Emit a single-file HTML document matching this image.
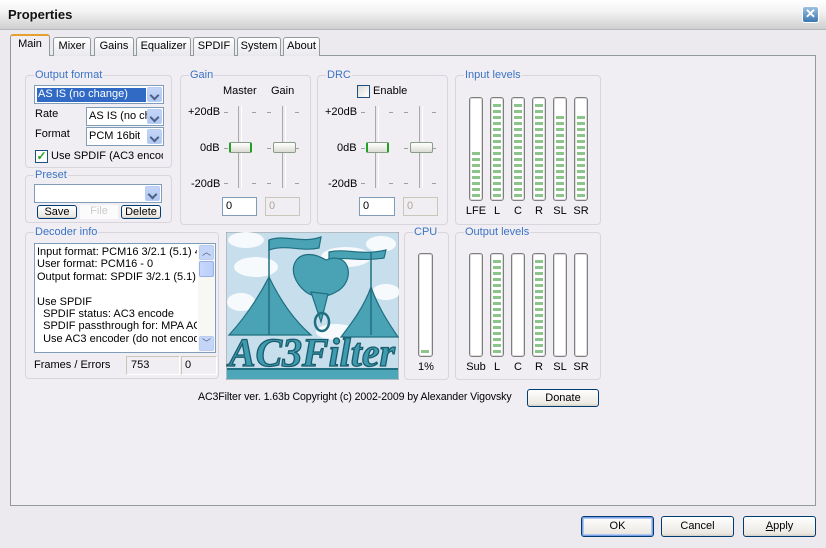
<!DOCTYPE html>
<html><head><meta charset="utf-8"><style>
*{box-sizing:border-box}
body{margin:0;width:826px;height:548px;overflow:hidden;background:#ece9ef;font-family:"Liberation Sans",Tahoma,sans-serif;font-size:11px;color:#000;position:relative}
.a{position:absolute}
.title{left:0;top:0;width:826px;height:30px;background:linear-gradient(#fff 0%,#f3f3f3 40%,#cfcfcf 100%);border-bottom:1px solid #b8b8b8}
.title span{position:absolute;left:8px;top:7px;font-weight:bold;font-size:13px;color:#111}
.close{left:802px;top:6px;width:17px;height:17px;border-radius:3px;background:linear-gradient(#9ac0e0,#3d78b0);border:1px solid #fff;color:#fff;font-weight:bold;font-size:13px;text-align:center;line-height:14px}
.panel{left:10px;top:55px;width:806px;height:451px;border:1px solid #919b9c;background:#f0eef3}
.tab{top:37px;height:19px;border:1px solid #919b9c;border-bottom:none;border-radius:3px 3px 0 0;background:linear-gradient(#fff,#e8e8ee);text-align:center;line-height:17px;font-size:11px}
.tab.sel{top:34px;height:22px;background:#f0eef3;border-top:2px solid #e6a030;z-index:2}
.grp{border:1px solid #d8d6dc;border-radius:4px}
.gl{position:absolute;top:-7px;left:8px;background:#f0eef3;color:#3b73c4;padding:0 1px;font-size:11px;line-height:12px}
.combo{background:#fff;border:1px solid #7f9db9;height:19px}
.combo .t{position:absolute;left:2px;top:2px;white-space:nowrap;overflow:hidden}
.dd{position:absolute;right:1px;top:1px;width:15px;height:15px;border-radius:2px;background:linear-gradient(#c4d5f7,#b0c8f2);border:1px solid #b9cdf2}
.dd:after{content:"";position:absolute;left:3px;top:4px;width:5px;height:5px;border-right:2px solid #4d6185;border-bottom:2px solid #4d6185;transform:rotate(45deg)}
.btn{border:1px solid #003c74;border-radius:3px;background:linear-gradient(#fff,#ece9e3 85%,#d6d0c5);text-align:center;line-height:18px}
.edit{background:#fff;border:1px solid #7f9db9;padding-left:3px;line-height:17px}
.edit.dis{background:#f0eef3;border-color:#c9c7ba;color:#aca899}
.track{width:4px;border-left:1px solid #a9a9a9;border-right:1px solid #fff;background:#ece9ef}
.tick{width:4px;height:1px;background:#a0a0a0}
.thumb{width:23px;height:11px;border-radius:2px;border:1px solid #8b9c8b;background:linear-gradient(#fff,#dcdcd4)}
.thumb.g{border-left:2px solid #21a121;border-right:2px solid #21a121}
.meter{width:14px;height:104px;border:1px solid #7f7f7f;border-radius:3px;background:#fff;box-shadow:inset 0 0 0 1px #ddd}
.fill{position:absolute;left:2px;bottom:3px;width:8px;background:repeating-linear-gradient(to top,#8cc48c 0 3px,transparent 3px 6px)}
.lab{text-align:center;width:22px}
</style></head><body>
<div class="a title"><span>Properties</span></div>
<div class="a close">✕</div>

<div class="a panel"></div>
<div class="a tab sel" style="left:10px;width:40px">Main</div>
<div class="a tab" style="left:53px;width:38px">Mixer</div>
<div class="a tab" style="left:94px;width:40px">Gains</div>
<div class="a tab" style="left:136px;width:55px">Equalizer</div>
<div class="a tab" style="left:193px;width:42px">SPDIF</div>
<div class="a tab" style="left:237px;width:44px">System</div>
<div class="a tab" style="left:283px;width:37px">About</div>

<div class="a grp" style="left:25px;top:75px;width:147px;height:93px"><span class="gl">Output format</span></div>
<div class="a combo" style="left:34px;top:85px;width:130px"><div class="a" style="left:2px;top:2px;width:109px;height:14px;background:#316ac5"></div><span class="t" style="color:#fff;left:3px">AS IS (no change)</span><div class="dd"></div></div>
<div class="a" style="left:35px;top:108px">Rate</div>
<div class="a combo" style="left:86px;top:107px;width:78px"><span class="t" style="width:58px">AS IS (no change)</span><div class="dd"></div></div>
<div class="a" style="left:35px;top:128px">Format</div>
<div class="a combo" style="left:86px;top:127px;width:78px"><span class="t">PCM 16bit</span><div class="dd"></div></div>
<div class="a" style="left:35px;top:150px;width:13px;height:13px;border:1px solid #1c5180;background:#fff;color:#21a121;font-size:12px;line-height:11px;text-align:center;font-weight:bold">✓</div>
<div class="a" style="left:51px;top:150px;white-space:nowrap;width:112px;overflow:hidden">Use SPDIF (AC3 encode)</div>

<div class="a grp" style="left:25px;top:175px;width:147px;height:48px"><span class="gl">Preset</span></div>
<div class="a combo" style="left:34px;top:184px;width:128px"><div class="dd"></div></div>
<div class="a btn" style="left:37px;top:205px;width:40px;height:14px;line-height:12px">Save</div>
<div class="a" style="left:80px;top:205px;width:38px;height:14px;line-height:12px;text-align:center;background:#fbfbfb;color:#ccc">File</div>
<div class="a btn" style="left:121px;top:205px;width:40px;height:14px;line-height:12px">Delete</div>

<div class="a grp" style="left:180px;top:75px;width:131px;height:150px"><span class="gl">Gain</span></div>
<div class="a" style="left:223px;top:85px">Master</div>
<div class="a" style="left:271px;top:85px">Gain</div>
<div class="a" style="left:188px;top:106px">+20dB</div>
<div class="a" style="left:200px;top:142px">0dB</div>
<div class="a" style="left:191px;top:178px">-20dB</div>
<div class="a track" style="left:238px;top:106px;height:82px"></div>
<div class="a track" style="left:282px;top:106px;height:82px"></div>
<div class="a tick" style="left:224px;top:112px"></div><div class="a tick" style="left:252px;top:112px"></div><div class="a tick" style="left:267px;top:112px"></div><div class="a tick" style="left:295px;top:112px"></div>
<div class="a tick" style="left:224px;top:148px"></div><div class="a tick" style="left:267px;top:148px"></div><div class="a tick" style="left:295px;top:148px"></div>
<div class="a tick" style="left:224px;top:183px"></div><div class="a tick" style="left:252px;top:183px"></div><div class="a tick" style="left:267px;top:183px"></div><div class="a tick" style="left:295px;top:183px"></div>
<div class="a thumb g" style="left:229px;top:142px"></div>
<div class="a thumb" style="left:273px;top:142px"></div>
<div class="a edit" style="left:222px;top:197px;width:35px;height:19px">0</div>
<div class="a edit dis" style="left:265px;top:197px;width:35px;height:19px">0</div>

<div class="a grp" style="left:317px;top:75px;width:131px;height:150px"><span class="gl">DRC</span></div>
<div class="a" style="left:357px;top:85px;width:13px;height:13px;border:1px solid #1c5180;background:linear-gradient(135deg,#dcdcd4,#fff)"></div>
<div class="a" style="left:373px;top:85px">Enable</div>
<div class="a" style="left:325px;top:106px">+20dB</div>
<div class="a" style="left:337px;top:142px">0dB</div>
<div class="a" style="left:328px;top:178px">-20dB</div>
<div class="a track" style="left:375px;top:106px;height:82px"></div>
<div class="a track" style="left:419px;top:106px;height:82px"></div>
<div class="a tick" style="left:361px;top:112px"></div><div class="a tick" style="left:389px;top:112px"></div><div class="a tick" style="left:404px;top:112px"></div><div class="a tick" style="left:432px;top:112px"></div>
<div class="a tick" style="left:361px;top:148px"></div><div class="a tick" style="left:404px;top:148px"></div><div class="a tick" style="left:432px;top:148px"></div>
<div class="a tick" style="left:361px;top:183px"></div><div class="a tick" style="left:389px;top:183px"></div><div class="a tick" style="left:404px;top:183px"></div><div class="a tick" style="left:432px;top:183px"></div>
<div class="a thumb g" style="left:366px;top:142px"></div>
<div class="a thumb" style="left:410px;top:142px"></div>
<div class="a edit" style="left:359px;top:197px;width:36px;height:19px">0</div>
<div class="a edit dis" style="left:403px;top:197px;width:35px;height:19px">0</div>

<div class="a grp" style="left:455px;top:75px;width:146px;height:150px"><span class="gl">Input levels</span></div>
<div class="a meter" style="left:469px;top:97px"><div class="fill" style="height:45px"></div></div>
<div class="a meter" style="left:490px;top:97px"><div class="fill" style="height:96px"></div></div>
<div class="a meter" style="left:511px;top:97px"><div class="fill" style="height:96px"></div></div>
<div class="a meter" style="left:532px;top:97px"><div class="fill" style="height:96px"></div></div>
<div class="a meter" style="left:553px;top:97px"><div class="fill" style="height:84px"></div></div>
<div class="a meter" style="left:574px;top:97px"><div class="fill" style="height:84px"></div></div>
<div class="a lab" style="left:465px;top:205px">LFE</div>
<div class="a lab" style="left:486px;top:205px">L</div>
<div class="a lab" style="left:507px;top:205px">C</div>
<div class="a lab" style="left:528px;top:205px">R</div>
<div class="a lab" style="left:549px;top:205px">SL</div>
<div class="a lab" style="left:570px;top:205px">SR</div>

<div class="a grp" style="left:25px;top:232px;width:194px;height:147px"><span class="gl">Decoder info</span></div>
<div class="a" style="left:34px;top:243px;width:182px;height:110px;border:1px solid #7f9db9;background:#fff;overflow:hidden">
<div style="position:absolute;left:2px;top:2px;width:160px;white-space:nowrap;overflow:hidden;line-height:12.4px">Input format: PCM16 3/2.1 (5.1) 48000<br>User format: PCM16 - 0<br>Output format: SPDIF 3/2.1 (5.1) 48000<br><br>Use SPDIF<br>&nbsp;&nbsp;SPDIF status: AC3 encode<br>&nbsp;&nbsp;SPDIF passthrough for: MPA AC3<br>&nbsp;&nbsp;Use AC3 encoder (do not encode)</div>
<div style="position:absolute;right:0;top:0;width:17px;height:108px;background:#f7f7f4"></div>
<div style="position:absolute;right:1px;top:1px;width:15px;height:15px;border-radius:2px;background:#c4d5f7;border:1px solid #b9cdf2;color:#4d6185;font-size:9px;text-align:center;line-height:13px">︿</div>
<div style="position:absolute;right:1px;top:17px;width:15px;height:16px;border-radius:2px;background:linear-gradient(90deg,#c9d8fc,#b8cdf8);border:1px solid #98b1e5"></div>
<div style="position:absolute;right:1px;bottom:1px;width:15px;height:15px;border-radius:2px;background:#c4d5f7;border:1px solid #b9cdf2;color:#4d6185;font-size:9px;text-align:center;line-height:13px">﹀</div>
</div>
<div class="a" style="left:34px;top:359px">Frames / Errors</div>
<div class="a" style="left:126px;top:356px;width:54px;height:19px;border:1px solid #c9c7ba;border-right-color:#fff;border-bottom-color:#fff;padding-left:4px;line-height:17px">753</div>
<div class="a" style="left:181px;top:356px;width:36px;height:19px;border:1px solid #c9c7ba;border-right-color:#fff;border-bottom-color:#fff;padding-left:3px;line-height:17px">0</div>

<svg class="a" style="left:226px;top:232px" width="173" height="148" viewBox="0 0 173 148">
<rect x="0" y="0" width="173" height="148" fill="#c7dfec" stroke="#999"/>
<g fill="#fff" opacity=".85"><ellipse cx="20" cy="8" rx="18" ry="8"/><ellipse cx="30" cy="35" rx="22" ry="10"/><ellipse cx="120" cy="25" rx="25" ry="10"/><ellipse cx="155" cy="12" rx="15" ry="8"/><ellipse cx="160" cy="60" rx="14" ry="8"/><ellipse cx="15" cy="70" rx="14" ry="9"/><ellipse cx="110" cy="100" rx="20" ry="8"/></g>
<g fill="#4aa3b5" stroke="#1f6f80" stroke-width="1.2">
<path d="M43 8 C60 2,75 12,95 5 L93 16 C75 20,60 12,43 18Z"/>
<path d="M103 20 C120 16,135 24,160 18 L158 26 C135 30,120 24,103 28Z"/>
<path d="M43 45 C30 70,15 90,3 103 L85 103 C70 90,55 70,43 45Z"/>
<path d="M145 55 C138 75,125 92,115 105 L172 105 C162 90,152 75,145 55Z"/>
<path d="M80 60 C55 40,70 10,100 28 C125 18,130 50,110 60 C100 66,88 66,80 60Z"/>
<path d="M85 60 L95 90 L102 62Z"/>
</g>
<line x1="43" y1="8" x2="43" y2="103" stroke="#1f6f80" stroke-width="1.5"/>
<line x1="145" y1="20" x2="145" y2="103" stroke="#1f6f80" stroke-width="1.5"/>
<ellipse cx="96" cy="90" rx="7" ry="9" fill="none" stroke="#1f6f80" stroke-width="2.5"/>
<text x="86" y="134" text-anchor="middle" font-family="Liberation Serif,serif" font-size="40" font-style="italic" font-weight="bold" fill="#3e9bb0" stroke="#1a5c6b" stroke-width="1.3" textLength="166" lengthAdjust="spacingAndGlyphs">AC3Filter</text>
<rect x="1" y="136" width="171" height="11" fill="#4ea7b8"/>
<rect x="1" y="136" width="171" height="2" fill="#1f6f80"/>
</svg>

<div class="a grp" style="left:404px;top:232px;width:45px;height:148px"><span class="gl" style="left:8px">CPU</span></div>
<div class="a meter" style="left:418px;top:253px;width:15px"><div class="fill" style="height:3px"></div></div>
<div class="a" style="left:418px;top:361px">1%</div>

<div class="a grp" style="left:455px;top:232px;width:146px;height:148px"><span class="gl">Output levels</span></div>
<div class="a meter" style="left:469px;top:253px"></div>
<div class="a meter" style="left:490px;top:253px"><div class="fill" style="height:96px"></div></div>
<div class="a meter" style="left:511px;top:253px"></div>
<div class="a meter" style="left:532px;top:253px"><div class="fill" style="height:96px"></div></div>
<div class="a meter" style="left:553px;top:253px"></div>
<div class="a meter" style="left:574px;top:253px"></div>
<div class="a lab" style="left:465px;top:361px">Sub</div>
<div class="a lab" style="left:486px;top:361px">L</div>
<div class="a lab" style="left:507px;top:361px">C</div>
<div class="a lab" style="left:528px;top:361px">R</div>
<div class="a lab" style="left:549px;top:361px">SL</div>
<div class="a lab" style="left:570px;top:361px">SR</div>

<div class="a" style="left:198px;top:391px;white-space:nowrap;font-size:10.6px;letter-spacing:-0.1px">AC3Filter ver. 1.63b Copyright (c) 2002-2009 by Alexander Vigovsky</div>
<div class="a btn" style="left:527px;top:389px;width:72px;height:18px;line-height:16px">Donate</div>

<div class="a btn" style="left:581px;top:516px;width:73px;height:21px;border-color:#003c74;box-shadow:inset 0 0 0 1px #7ba2e7, inset 0 0 0 2px #b0c8f0">OK</div>
<div class="a btn" style="left:661px;top:516px;width:73px;height:21px">Cancel</div>
<div class="a btn" style="left:743px;top:516px;width:73px;height:21px"><u>A</u>pply</div>
</body></html>
